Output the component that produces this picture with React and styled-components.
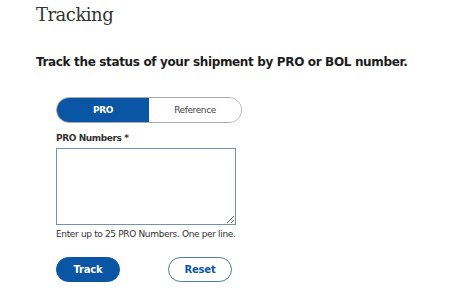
import { useState } from "react";
import styled, { createGlobalStyle } from "styled-components";

const GlobalStyle = createGlobalStyle`
    html, body {
        margin: 0;
        padding: 0;
        background-color: #ffffff;
    }
`;

function App() {
    const [mode, setMode] = useState("PRO");
    const [numbers, setNumbers] = useState("");

    return (
        <Page>
            <GlobalStyle />
            <Title>Tracking</Title>
            <Subtitle>Track the status of your shipment by PRO or BOL number.</Subtitle>
            <Form onSubmit={(e) => e.preventDefault()}>
                <Toggle>
                    <ToggleOption type="button" ativo={mode === "PRO"} onClick={() => setMode("PRO")}>PRO</ToggleOption>
                    <ToggleOption type="button" ativo={mode === "Reference"} onClick={() => setMode("Reference")}>Reference</ToggleOption>
                </Toggle>
                <Label htmlFor="pro-numbers">PRO Numbers *</Label>
                <TextArea id="pro-numbers" value={numbers} onChange={(e) => setNumbers(e.target.value)} />
                <Help>Enter up to 25 PRO Numbers. One per line.</Help>
                <Buttons>
                    <Button type="submit" primario>Track</Button>
                    <Button type="button" onClick={() => setNumbers("")}>Reset</Button>
                </Buttons>
            </Form>
        </Page>
    );
}

const Page = styled.div`
    padding: 3px 0 0 36px;
    font-family: "DejaVu Sans", Verdana, sans-serif;
    color: #1a1a1a;
`;

const Title = styled.h1`
    margin: 0;
    font-family: "DejaVu Serif", Georgia, serif;
    font-weight: 400;
    font-size: 18px;
    line-height: 24px;
    letter-spacing: -0.5px;
    color: #333333;
`;

const Subtitle = styled.p`
    margin: 27px 0 0 0;
    font-weight: 700;
    font-size: 12px;
    line-height: 16px;
    color: #1c1c1c;
    letter-spacing: -0.35px;
`;

const Form = styled.form`
    margin: 27px 0 0 20px;
    display: flex;
    flex-direction: column;
    align-items: flex-start;
`;

const Toggle = styled.div`
    display: flex;
    width: 186px;
    height: 26px;
    box-sizing: border-box;
    border: 1px solid #a8a8a8;
    border-radius: 13px;
    overflow: hidden;
`;

const ToggleOption = styled.button`
    flex: 1;
    border: none;
    margin: 0;
    padding: 0;
    font-family: "DejaVu Sans", Verdana, sans-serif;
    font-size: 9px;
    letter-spacing: -0.4px;
    font-weight: ${props => props.ativo ? 700 : 400};
    color: ${props => props.ativo ? "#ffffff" : "#444444"};
    background-color: ${props => props.ativo ? "#0b56a4" : "#ffffff"};
    cursor: pointer;
`;

const Label = styled.label`
    margin-top: 9px;
    font-weight: 700;
    font-size: 9px;
    line-height: 12px;
    letter-spacing: -0.4px;
    color: #333333;
`;

const TextArea = styled.textarea`
    margin-top: 4px;
    width: 180px;
    height: 77px;
    box-sizing: border-box;
    border: 1px solid #6a93c4;
    border-radius: 0;
    padding: 4px;
    font-family: "DejaVu Sans", Verdana, sans-serif;
    font-size: 10px;
    resize: vertical;
    outline: none;
`;

const Help = styled.p`
    margin: 3px 0 0 0;
    font-size: 9px;
    line-height: 12px;
    letter-spacing: -0.35px;
    color: #333333;
`;

const Buttons = styled.div`
    display: flex;
    gap: 48px;
    margin-top: 17px;
`;

const Button = styled.button`
    width: 64px;
    height: 25px;
    box-sizing: border-box;
    border-radius: 13px;
    border: 1px solid ${props => props.primario ? "#0b56a4" : "#4f79a8"};
    background-color: ${props => props.primario ? "#0b56a4" : "#ffffff"};
    color: ${props => props.primario ? "#ffffff" : "#0b56a4"};
    font-family: "DejaVu Sans", Verdana, sans-serif;
    font-weight: 700;
    font-size: 10px;
    letter-spacing: -0.2px;
    cursor: pointer;
`;

export default App;
